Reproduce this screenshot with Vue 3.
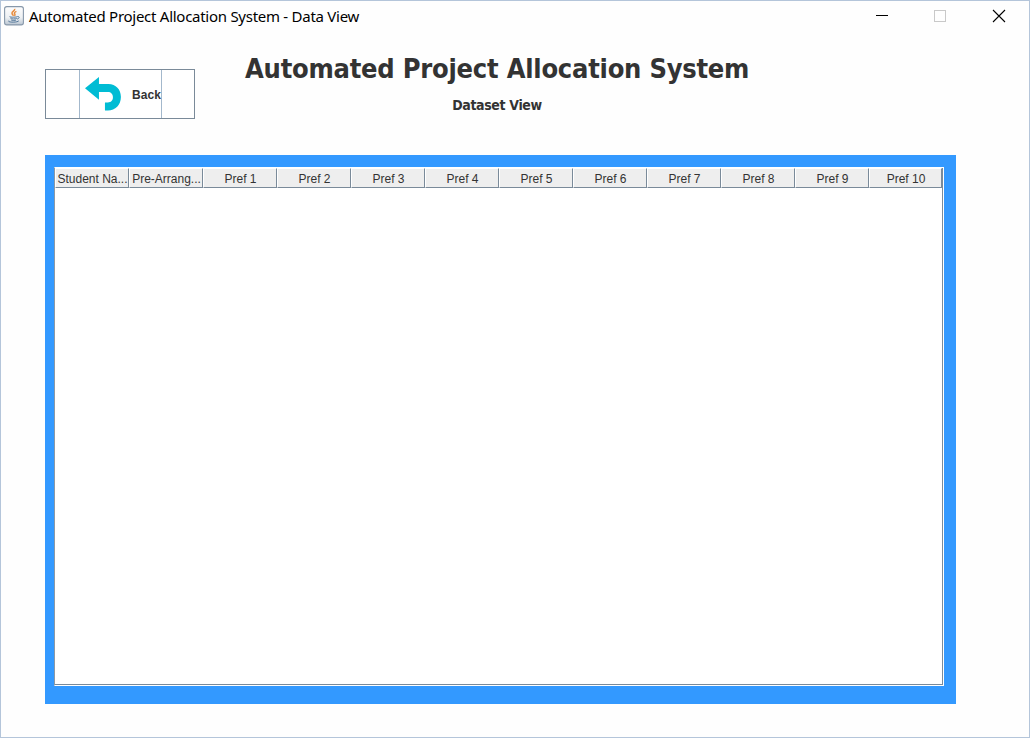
<script setup>
const columns = ['Student Na...', 'Pre-Arrang...', ...Array.from({ length: 10 }, (_, i) => `Pref ${i + 1}`)]
</script>

<template>
  <div class="window">
    <header class="titlebar">
      <svg class="app-icon" width="20" height="20" viewBox="0 0 20 20">
        <defs>
          <linearGradient id="tile" x1="0" y1="0" x2="0" y2="1">
            <stop offset="0" stop-color="#fdfdfd" />
            <stop offset="0.6" stop-color="#edf0f3" />
            <stop offset="1" stop-color="#b9c5d1" />
          </linearGradient>
        </defs>
        <rect x="0.6" y="0.6" width="18.8" height="18.3" rx="2.2" fill="url(#tile)" stroke="#8798aa" stroke-width="1.1" />
        <path d="M10.6 2.8c1 2-3.200 2.700-2.600 4.700.2.900 1.100 1.300 1.500 2.200M12.400 5.400c-2.800 1.200-2 2.100-1.500 2.900.3.600-.1 1.100-.5 1.500" fill="none" stroke="#e78b3c" stroke-width="1.500" />
        <path d="M5.800 10.500c-1.400.8 6 1 7.700.1M6.500 12.300c1 .9 4.800.9 6.300 0M7.200 14c1.200.7 3.500.7 4.800 0M13.500 10.600c2.500-.4 2 1.900-.4 2.500M4.600 14.800c-1.500 1.600 8.500 2 10.200 0" fill="none" stroke="#57799b" stroke-width="1" />
      </svg>
      <span class="caption">Automated Project Allocation System - Data View</span>
      <svg class="controls" width="134" height="20" viewBox="0 0 134 20" shape-rendering="crispEdges">
        <path d="M0 9.500h12" stroke="#000" />
        <rect x="58.500" y="4.500" width="11" height="11" fill="none" stroke="#c9c9c9" />
        <path d="M117 4l12 12M129 4l-12 12" stroke="#000" stroke-width="1.100" shape-rendering="auto" />
      </svg>
    </header>

    <div class="top">
      <button class="back">
        <span class="back-inner">
          <svg width="36" height="34" viewBox="0 0 36 34">
            <path d="M0 11.300L14 0V7H23.500C31 7 36 12.500 36 20C36 28 30.500 33.500 23 33.500H20V25.500H23C26 25.500 28 23.500 28 20.300C28 17 26 15 23 15H14V22.800Z" fill="#00bcd4" />
          </svg>
          <span class="back-label">Back</span>
        </span>
      </button>
      <div class="headings">
        <h1>Automated Project Allocation System</h1>
        <h2>Dataset View</h2>
      </div>
    </div>

    <main class="panel">
      <div class="scroll">
        <div class="table-head">
          <div v-for="c in columns" :key="c" class="cell">{{ c }}</div>
        </div>
        <div class="viewport"></div>
      </div>
    </main>
  </div>
</template>

<style>
body { background: #fff; }
</style>

<style scoped>
.window {
  box-sizing: border-box;
  width: 1030px;
  height: 738px;
  overflow: hidden;
  border: 1px solid #b4c5da;
  background: #fefefe;
  font-family: "Liberation Sans", Arial, sans-serif;
  color: #333;
}
.titlebar {
  display: flex;
  align-items: flex-start;
  height: 54px;
  padding: 5px 19px 0 3px;
  box-sizing: border-box;
}
.caption {
  margin: -1px 0 0 5px;
  font: 15px/22px "Noto Sans", sans-serif;
  letter-spacing: -0.27px;
  white-space: nowrap;
  color: #000;
}
.controls { margin-left: auto; }
.app-icon { flex: none; }
.top {
  display: flex;
  align-items: flex-start;
  height: 100px;
  padding-left: 44px;
  box-sizing: border-box;
}
.back {
  box-sizing: border-box;
  width: 150px;
  height: 50px;
  margin: 14px 0 0;
  padding: 0 33px;
  border: 1px solid #7a8a99;
  background: #fff;
  display: flex;
}
.back-inner {
  box-sizing: border-box;
  width: 83px;
  height: 48px;
  display: flex;
  align-items: center;
  border-style: solid;
  border-width: 0 1px;
  border-color: #a3b8cc;
  padding-left: 5px;
}
.back-inner svg { margin-top: -1px; }
.back-label {
  margin: 2px 0 0 11px;
  font: bold 12px/16px "Liberation Sans", Arial, sans-serif;
  letter-spacing: 0.1px;
  color: #333;
}
.headings {
  width: 504px;
  margin-left: 50px;
  text-align: center;
  white-space: nowrap;
}
h1, h2 {
  margin: 0;
  font-family: "DejaVu Sans Condensed", "DejaVu Sans", sans-serif;
  font-weight: bold;
  font-stretch: condensed;
  color: #333;
}
h1 { font-size: 27px; line-height: 28px; letter-spacing: -0.23px; }
h2 { margin-top: 13px; font-size: 14px; line-height: 18px; letter-spacing: -0.35px; }
.panel {
  box-sizing: border-box;
  width: 911px;
  height: 549px;
  margin-left: 44px;
  padding: 12px 12px 18px 9px;
  background: #3399ff;
}
.scroll {
  box-sizing: border-box;
  width: 890px;
  height: 519px;
  display: flex;
  flex-direction: column;
  border: 1px solid #fff;
  border-left-color: #8c98a4;
  background: #fff;
}
.table-head {
  display: flex;
  height: 20px;
  border-right: 1px solid #7a8a99;
}
.cell {
  box-sizing: border-box;
  flex: 0 0 74px;
  height: 20px;
  padding-left: 1px;
  border: 1px solid #fff;
  border-right-color: #7a8a99;
  border-bottom-color: #7a8a99;
  background: #eee;
  font-size: 12px;
  line-height: 20px;
  text-align: center;
  white-space: nowrap;
}
.cell:last-child { flex-basis: 73px; }
.viewport {
  flex: 1;
  border: solid #7a8a99;
  border-width: 0 1px 1px 0;
}
</style>
